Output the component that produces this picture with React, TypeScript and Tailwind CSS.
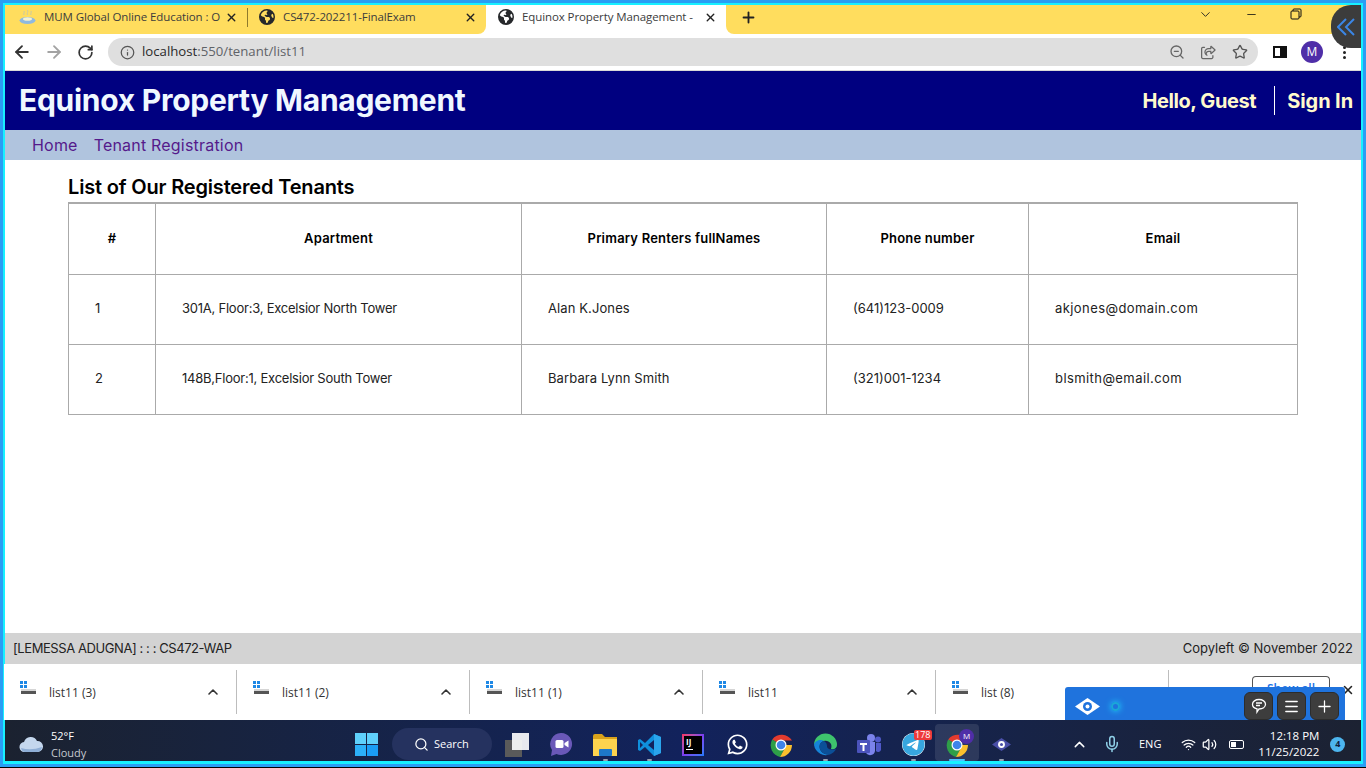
import type { ReactNode } from 'react'
import { ArrowLeft, ArrowRight, ChevronDown, ChevronUp, Info, Menu, Mic, Minus, Plus, RotateCw, Search, Star, Volume2, Wifi, X, ZoomOut } from 'lucide-react'
import { FaEarthAmericas, FaRegShareFromSquare, FaTelegram } from 'react-icons/fa6'
import { FaWhatsapp } from 'react-icons/fa'

const tenants = [
  ['1', '301A, Floor:3, Excelsior North Tower', 'Alan K.Jones', '(641)123-0009', 'akjones@domain.com'],
  ['2', '148B,Floor:1, Excelsior South Tower', 'Barbara Lynn Smith', '(321)001-1234', 'blsmith@email.com'],
]

// the body font runs a little narrower or wider than the original per column
const cellTracking = ['', 'tracking-[-0.23px]', 'tracking-[0.1px]', '', 'tracking-[0.42px]']

const downloads = ['list11 (3)', 'list11 (2)', 'list11 (1)', 'list11', 'list (8)']

function Eye({ size = 20 }: { size?: number }) {
  return (
    <svg width={size} height={size * 0.68} viewBox="0 0 25 17">
      <path d="M12.5 0 25 8.500 12.500 17 0 8.500Z" fill="#fff" />
      <circle cx="12.500" cy="8.500" r="4.500" fill="#1f73dd" />
      <circle cx="12.500" cy="8.500" r="2" fill="#fff" />
    </svg>
  )
}

function ChromeLogo() {
  return (
    <svg width="24" height="24" viewBox="0 0 24 24">
      <path d="M12 12 3.200 6.500A12 12 0 0 1 23 7.500H12Z" fill="#e33b2e" />
      <path d="M12 12 3.200 6.500A12 12 0 0 0 11 24l5-9Z" fill="#2e9e48" />
      <path d="M12 12h11a12 12 0 0 1-12 12l5-9Z" fill="#fbc02d" />
      <circle cx="12" cy="12" r="5.500" fill="#fff" />
      <circle cx="12" cy="12" r="4.300" fill="#3f84ea" />
    </svg>
  )
}

function Slot({ children, dot, active }: { children: ReactNode; dot?: boolean; active?: boolean }) {
  return (
    <div className={active ? 'relative flex h-[37px] w-[44px] items-center justify-center rounded bg-white/10 pt-[4px]' : 'relative flex h-[37px] w-[44px] items-center justify-center pt-[4px]'}>
      {children}
      {dot && <span className="absolute bottom-0 h-[2px] w-[5px] rounded-full bg-gray-400" />}
      {active && <span className="absolute bottom-0 h-[2px] w-[16px] rounded-full bg-[#4cc2ff]" />}
    </div>
  )
}

function Tab({ title, icon, className }: { title: string; icon: ReactNode; className: string }) {
  return (
    <div className={`flex h-full items-center ${className}`}>
      <span className="flex w-[24px] shrink-0">{icon}</span>
      <span className="whitespace-nowrap text-[11.500px] tracking-[-0.1px] text-[#3c3c3c]">{title}</span>
      <X size={13} strokeWidth={2.600} className="ml-auto mr-[9px] shrink-0 text-[#222]" />
    </div>
  )
}

export default function App() {
  return (
    <div className="h-[768px] w-[1366px] overflow-hidden bg-black font-['Open_Sans',sans-serif]">
      <div className="relative h-[767px] border-[3px] border-[#2a9df4]">
        <div className="flex h-full flex-col border-2 border-b-[3px] border-[#17f0ff] bg-white">
          {/* chrome tabs */}
          <div className="flex h-[29px] shrink-0 bg-white">
            <div className="flex w-[481px] items-center rounded-br-lg bg-[#ffdd5e] pb-[5px]">
              <Tab
                className="w-[242px] pl-[15px]"
                title="MUM Global Online Education : O"
                icon={
                  <svg width="17" height="15" viewBox="0 0 17 15" className="-ml-px">
                    <path d="M5 1c1 2-1 2 0 4M8.500 0c1 2-1 3 0 5M12 1c1 2-1 2 0 4" stroke="#c9c9a8" strokeWidth="1" fill="none" />
                    <ellipse cx="8.500" cy="10.500" rx="8" ry="3.500" fill="#8fb9df" />
                    <ellipse cx="8.500" cy="9" rx="4.500" ry="1.800" fill="#f5f1d0" />
                  </svg>
                }
              />
              <span className="h-[19px] w-px shrink-0 bg-[#8f7a2c]" />
              <Tab className="w-[238px] pl-[11px]" title="CS472-202211-FinalExam" icon={<FaEarthAmericas size={16} className="text-[#26282b]" />} />
            </div>
            <div className="w-[240px] pb-[5px]">
              <Tab className="w-[240px] pl-[12px]" title="Equinox Property Management -" icon={<FaEarthAmericas size={16} className="text-[#26282b]" />} />
            </div>
            <div className="flex flex-1 items-center rounded-bl-lg bg-[#ffdd5e] pb-[5px] pl-[14px]">
              <Plus size={17} strokeWidth={2.600} className="text-[#222]" />
              <ChevronDown size={15} strokeWidth={1.500} className="-mt-[6px] ml-[441px] text-[#222]" />
              <Minus size={13} strokeWidth={1.500} className="-mt-[6px] ml-[32px] text-[#111]" />
              <svg width="12" height="12" viewBox="0 0 12 12" className="-mt-[6px] ml-[32px]">
                <path d="M3 3V2a1 1 0 0 1 1-1h6a1 1 0 0 1 1 1v6a1 1 0 0 1-1 1H9M2 3h6a1 1 0 0 1 1 1v6a1 1 0 0 1-1 1H2a1 1 0 0 1-1-1V4a1 1 0 0 1 1-1Z" fill="none" stroke="#111" />
              </svg>
            </div>
          </div>

          {/* toolbar */}
          <div className="flex h-[37px] shrink-0 items-center border-b border-[#d8d8d8] bg-white">
            <ArrowLeft size={20} strokeWidth={2.200} className="ml-[7px] text-[#333]" />
            <ArrowRight size={20} strokeWidth={2.200} className="ml-[12px] text-[#a3a3a3]" />
            <RotateCw size={17} strokeWidth={2.400} className="ml-[13px] text-[#333]" />
            <div className="ml-[14px] flex h-[28px] w-[1150px] items-center rounded-full bg-[#dfdfdf] pl-[12px] pr-[10px]">
              <Info size={15} className="text-[#555]" />
              <span className="ml-[7px] text-[13.200px] text-[#5f6368]">
                <span className="text-[#2a2a2a]">localhost</span>:550/tenant/list11
              </span>
              <ZoomOut size={16} className="ml-auto text-[#666]" />
              <FaRegShareFromSquare size={15} className="ml-[16px] text-[#666]" />
              <Star size={16} strokeWidth={2} className="ml-[16px] text-[#555]" />
            </div>
            <span className="ml-[15px] flex h-[12px] w-[14px] justify-start border-2 border-[#111]">
              <span className="h-full w-[5px] bg-white" />
              <span className="h-full flex-1 bg-[#111]" />
            </span>
            <span className="ml-[14px] flex size-[22px] items-center justify-center rounded-full bg-[#4f2ea8] text-[12px] text-white">M</span>
            <span className="ml-[20px] flex flex-col gap-[2px]">
              <i className="size-[3px] rounded-full bg-[#222]" />
              <i className="size-[3px] rounded-full bg-[#222]" />
              <i className="size-[3px] rounded-full bg-[#222]" />
            </span>
          </div>

          {/* page */}
          <div className="flex flex-1 flex-col font-['Inter',sans-serif]">
            <header className="flex h-[59px] shrink-0 items-center justify-between bg-[#000080] pl-[14px] pr-[8px]">
              <h1 className="text-[30px] font-bold tracking-[-0.27px] text-[#f0f8ff]">Equinox Property Management</h1>
              <div className="flex items-center text-[20px] font-bold text-[#fffacd]">
                <span className="tracking-[-0.4px]">Hello, Guest</span>
                <span className="ml-[18px] mr-[12px] h-[29px] w-px bg-white" />
                <span className="tracking-[-0.1px]">Sign In</span>
              </div>
            </header>
            <nav className="flex h-[30px] shrink-0 items-center gap-[16px] bg-[#b0c4de] pl-[27px] text-[16px] tracking-[0.2px] text-[#551a8b]">
              <span>Home</span>
              <span>Tenant Registration</span>
            </nav>
            <main className="flex-1 px-[63px] pt-[15px]">
              <h2 className="text-[20px] font-semibold leading-[25px] tracking-[-0.17px] text-black">List of Our Registered Tenants</h2>
              <div className="mt-[2px] h-[2px] bg-[#aaa]" />
              <table className="w-[1229px] table-fixed border-collapse text-[13px] text-[#222]">
                <colgroup>
                  <col className="w-[87px]" />
                  <col className="w-[366px]" />
                  <col className="w-[305px]" />
                  <col className="w-[202px]" />
                  <col className="w-[269px]" />
                </colgroup>
                <thead>
                  <tr className="h-[70px]">
                    {['#', 'Apartment', 'Primary Renters fullNames', 'Phone number', 'Email'].map((h) => (
                      <th key={h} className="border border-t-0 border-[#aaa] font-semibold tracking-[0.2px] text-black">
                        {h}
                      </th>
                    ))}
                  </tr>
                </thead>
                <tbody>
                  {tenants.map((row) => (
                    <tr key={row[0]} className="h-[70px]">
                      {row.map((cell, i) => (
                        <td key={cell} className={`border border-[#aaa] pl-[26px] ${cellTracking[i]}`}>
                          {cell}
                        </td>
                      ))}
                    </tr>
                  ))}
                </tbody>
              </table>
            </main>
            <footer className="flex h-[31px] shrink-0 items-center justify-between bg-[#d3d3d3] pl-[8px] pr-[8px] text-[13px] text-[#222]">
              <span className="tracking-[-0.42px]">[LEMESSA ADUGNA] : : : CS472-WAP</span>
              <span>Copyleft © November 2022</span>
            </footer>
          </div>

          {/* downloads bar */}
          <div className="-ml-px flex h-[56px] shrink-0 items-center bg-white">
            {downloads.map((name) => (
              <div key={name} className="flex h-[44px] w-[233px] items-center border-r border-[#bdbdbd] pl-[16px] pr-[15px]">
                <svg width="16" height="14" viewBox="0 0 16 14" className="-mt-[8px]">
                  <rect x="0" y="0" width="3" height="3" fill="#1e88e5" />
                  <rect x="4" y="0" width="3" height="3" fill="#1e88e5" />
                  <rect x="0" y="4" width="3" height="3" fill="#1e88e5" />
                  <rect x="4" y="4" width="3" height="3" fill="#1e88e5" />
                  <rect x="1" y="8" width="15" height="2" fill="#d5d5d5" />
                  <rect x="1" y="10" width="15" height="3" fill="#555" />
                </svg>
                <span className="ml-[13px] pt-px text-[12px] text-[#333]">{name}</span>
                <ChevronUp size={16} strokeWidth={2.400} className="ml-auto text-[#333]" />
              </div>
            ))}
            <div className="ml-[83px] h-[44px] w-[78px] self-end rounded-t border border-b-0 border-[#555] pt-[3px] text-center text-[12px] font-semibold text-[#1a73e8]">Show all</div>
            <X size={14} strokeWidth={2.600} className="-mt-[4px] ml-[11px] text-[#222]" />
          </div>

          {/* taskbar */}
          <div className="flex h-[41px] shrink-0 items-end bg-gradient-to-r from-[#1b2230] via-[#12225c] to-[#1c2232] text-white">
            <div className="flex h-full w-[339px] items-center pl-[14px] pt-[7px]">
              <svg width="24" height="16" viewBox="0 0 24 16">
                <path d="M6 16a5 5 0 0 1-1-10 7 7 0 0 1 13-1 5.500 5.500 0 0 1 1 11Z" fill="#c4d7ee" />
                <path d="M2 12q10 3 21-1-1 5-5 5H6q-3 0-4-4Z" fill="#8eaed6" />
              </svg>
              <div className="ml-[8px] text-[11px] leading-[17px]">
                <div>52°F</div>
                <div className="text-[#c5c8cf]">Cloudy</div>
              </div>
            </div>
            <Slot>
              <span className="grid grid-cols-2 gap-[1px]">
                <i className="size-[11px] bg-[#5fd0fb]" />
                <i className="size-[11px] bg-[#5fd0fb]" />
                <i className="size-[11px] bg-[#2cb0f8]" />
                <i className="size-[11px] bg-[#1a9df5]" />
              </span>
            </Slot>
            <div className="mb-px ml-[4px] flex h-[32px] w-[100px] items-center rounded-full bg-[#25325f] pl-[22px] text-[11px]">
              <Search size={15} />
              <span className="ml-[5px]">Search</span>
            </div>
            <div className="ml-[3px] flex">
              <Slot>
                <span className="relative block size-[24px]">
                  <i className="absolute bottom-0 left-0 size-[17px] bg-[#5a5a5a]" />
                  <i className="absolute right-0 top-0 size-[17px] bg-white/90" />
                </span>
              </Slot>
              <Slot>
                <svg width="23" height="23" viewBox="0 0 23 23">
                  <path d="M11.500 0a11 11 0 1 1-5 21L1 23l1-6A11 11 0 0 1 11.500 0Z" fill="#6a58b8" />
                  <rect x="5.500" y="7" width="8" height="8" rx="1.500" fill="#fff" />
                  <path d="m14.500 10 4-2.500v7l-4-2.500Z" fill="#fff" />
                </svg>
              </Slot>
              <Slot dot>
                <svg width="24" height="22" viewBox="0 0 24 22">
                  <path d="M0 2a2 2 0 0 1 2-2h7l3 3h12v3H0Z" fill="#d9a21b" />
                  <rect y="5" width="24" height="17" fill="#fdd34e" />
                  <rect x="6" y="15" width="13" height="7" rx="1" fill="#1d78c9" />
                </svg>
              </Slot>
              <Slot dot>
                <svg width="24" height="24" viewBox="0 0 24 24">
                  <path d="M17 1 24 4v16l-7 3-9-9-5 4-2-1V7l2-1 5 4Z" fill="#0f8fdc" />
                  <path d="M17 1 24 4v16l-7 3Z" fill="#2aa5ec" />
                  <path d="m17 7-6 5 6 5Z" fill="#12225c" />
                  <path d="M3 9v6l3-3Z" fill="#12225c" />
                </svg>
              </Slot>
              <Slot>
                <span className="relative flex size-[22px] bg-gradient-to-br from-[#fe2857] via-[#7a3cf0] to-[#087cfa] p-[2px]">
                  <span className="flex size-full flex-col bg-black pl-[2px] pt-px text-[8px] font-bold leading-[10px]">
                    IJ
                    <i className="mt-[2px] h-px w-[7px] bg-white" />
                  </span>
                </span>
              </Slot>
              <Slot>
                <FaWhatsapp size={23} className="text-white" />
              </Slot>
              <Slot>
                <ChromeLogo />
              </Slot>
              <Slot dot>
                <svg width="24" height="24" viewBox="0 0 24 24">
                  <path d="M1 12a11.500 11.500 0 0 1 23 0c0 3-3 5-6 4 2-5-2-9-7-8-5 0-9 1-10 4Z" fill="#3ec46d" />
                  <path d="M1 12C2 7 8 6 11 8c-4 1-6 5-3 10 2 3 6 4 10 3A12 12 0 0 1 1 12Z" fill="#1684d8" />
                  <path d="M11 8c-4 1-6 5-3 10 2 3 6 4 10 3 2-1 4-3 5-5-3 1-9 1-9-3 0-2-1-4-3-5Z" fill="#0b4f97" />
                </svg>
              </Slot>
              <Slot>
                <svg width="24" height="24" viewBox="0 0 24 24">
                  <circle cx="14" cy="5" r="4" fill="#7b83eb" />
                  <circle cx="21" cy="6.500" r="3" fill="#5059c9" />
                  <path d="M9 9h9v9a5 5 0 0 1-9 2Z" fill="#7b83eb" />
                  <path d="M19 10h5v7a3 3 0 0 1-5 1Z" fill="#5059c9" />
                  <rect x="0" y="7" width="13" height="13" rx="1" fill="#4b53bc" />
                  <path d="M3 10h7v2H7.500v6h-2v-6H3Z" fill="#fff" />
                </svg>
              </Slot>
              <Slot dot>
                <span className="relative flex">
                  <FaTelegram size={23} className="rounded-full bg-white text-[#37a6de]" />
                  <span className="absolute -right-[7px] -top-[3px] rounded-[2px] bg-[#ee3b3b] px-px text-[9px] leading-[10px] text-white">178</span>
                </span>
              </Slot>
              <Slot active>
                <span className="relative flex">
                  <ChromeLogo />
                  <span className="absolute -right-[5px] -top-[4px] flex size-[15px] items-center justify-center rounded-full bg-[#4f2ea8] text-[8px] text-white">M</span>
                </span>
              </Slot>
              <Slot dot>
                <svg width="19" height="13" viewBox="0 0 25 17">
                  <path d="M12.500 0 25 8.500 12.500 17 0 8.500Z" fill="#4a4fa8" />
                  <circle cx="12.500" cy="8.500" r="4.500" fill="#fff" />
                  <circle cx="12.500" cy="8.500" r="2" fill="#4a4fa8" />
                </svg>
              </Slot>
            </div>
            <div className="ml-[48px] flex h-full items-center pt-[7px]">
              <ChevronUp size={17} />
              <Mic size={18} className="ml-[15px] text-[#8fd0e8]" />
              <span className="ml-[18px] text-[11px]">ENG</span>
              <Wifi size={15} className="ml-[20px]" />
              <Volume2 size={15} className="ml-[6px]" />
              <span className="ml-[12px] flex h-[9px] w-[15px] rounded-[2px] border border-white p-px">
                <i className="w-[5px] bg-white" />
              </span>
              <div className="ml-[7px] w-[68px] text-right text-[11.500px] leading-[16px]">
                <div>12:18 PM</div>
                <div>11/25/2022</div>
              </div>
              <span className="ml-[11px] flex size-[15px] items-center justify-center rounded-full bg-[#4db5ee] text-[9px] font-bold text-[#10203a]">4</span>
            </div>
          </div>
        </div>

        {/* sidebar handle over the browser corner */}
        <div className="absolute right-[2px] top-[2px] flex h-[43px] w-[30px] items-center justify-center rounded-l-[20px] bg-[#3c3c3c]">
          <svg width="18" height="18" viewBox="0 0 18 18" fill="none" stroke="#3b86e6" strokeWidth="2">
            <path d="M9 1 1 9l8 8M17 1 9 9l8 8" />
          </svg>
        </div>

        {/* floating widget over the downloads bar */}
        <div className="absolute left-[1062px] top-[684px] flex h-[33px] w-[280px] items-center rounded-t-[3px] bg-[#1f73dd] pl-[10px] pr-[6px]">
          <span className="flex items-center pt-[5px]">
            <Eye size={25} />
            <span className="ml-[11px] size-[9px] rounded-full border-2 border-[#1aa7d8] shadow-[0_0_6px_#21d4fd]" />
          </span>
          <div className="ml-auto flex gap-[4px] self-end">
            {[
              <svg key="c" width="16" height="16" viewBox="0 0 16 16" fill="none" stroke="#fff" strokeWidth="1.300"><path d="M8 1.500c3.600 0 6.500 2 6.500 4.800S11.600 11 8 11l-2 3v-3.200C3.300 10.300 1.500 8.500 1.500 6.300 1.500 3.500 4.400 1.500 8 1.500ZM5 5h6M5 7.500h4" /></svg>,
              <Menu key="m" size={17} />,
              <Plus key="p" size={19} strokeWidth={1.600} />,
            ].map((icon, i) => (
              <span key={i} className="flex h-[28px] w-[29px] items-center justify-center rounded-md border border-[#2c2c2c] bg-[#3d3d3d] text-white">
                {icon}
              </span>
            ))}
          </div>
        </div>
      </div>
    </div>
  )
}
